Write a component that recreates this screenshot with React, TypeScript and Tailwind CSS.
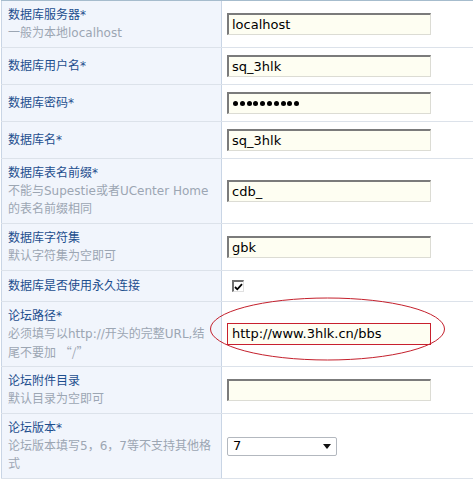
import React from "react";

type Row = {
  label: string;
  hint?: React.ReactNode[];
  h: string;
  field: React.ReactNode;
};

function TextBox({ value, red }: { value?: string; red?: boolean }) {
  return (
    <div
      className={
        red
          ? "w-[204px] h-[22px] border border-[#c8202e] bg-[#fefef2] pl-[4px] flex items-center text-[13px] text-black"
          : "w-[204px] h-[22px] border-t-2 border-l-2 border-r border-b border-t-[#7b7b7b] border-l-[#7b7b7b] border-r-[#dcdcd4] border-b-[#dcdcd4] bg-[#fefef2] pl-[3px] flex items-center text-[13px] text-black"
      }
    >
      {value}
    </div>
  );
}

function PasswordBox() {
  return (
    <div className="w-[204px] h-[22px] border-t-2 border-l-2 border-r border-b border-t-[#7b7b7b] border-l-[#7b7b7b] border-r-[#dcdcd4] border-b-[#dcdcd4] bg-[#fefef2] pl-[4px] flex items-center gap-[1.8px]">
      {Array.from({ length: 10 }).map((_, i) => (
        <span key={i} className="w-[5px] h-[5px] rounded-full bg-black" />
      ))}
    </div>
  );
}

function CheckBox() {
  return (
    <div className="ml-[5px] w-[12px] h-[12px] border-t-2 border-l-2 border-r border-b border-t-[#6f6f6f] border-l-[#6f6f6f] border-r-[#e0e0e0] border-b-[#e0e0e0] bg-white flex items-center justify-center">
      <svg width="9" height="8" viewBox="0 0 9 8">
        <path d="M1 4 L3.3 6.3 L8 1.2" stroke="#000" strokeWidth="1.8" fill="none" />
      </svg>
    </div>
  );
}

function SelectBox() {
  return (
    <div className="w-[110px] h-[19px] border border-[#b3b8bf] rounded-[2px] bg-white flex items-center justify-between pl-[5px] pr-[5px] text-[13px] text-black">
      <span>7</span>
      <svg width="8" height="5" viewBox="0 0 8 5">
        <path d="M0 0 H8 L4 5 Z" fill="#111" />
      </svg>
    </div>
  );
}

const cjk = { fontFamily: '"Noto Sans CJK SC", sans-serif' };

const rows: Row[] = [
  { label: "数据库服务器*", hint: ["一般为本地localhost"], h: "h-[47px]", field: <TextBox value="localhost" /> },
  { label: "数据库用户名*", h: "h-[37px]", field: <TextBox value="sq_3hlk" /> },
  { label: "数据库密码*", h: "h-[37px]", field: <PasswordBox /> },
  { label: "数据库名*", h: "h-[37px]", field: <TextBox value="sq_3hlk" /> },
  {
    label: "数据库表名前缀*",
    hint: ["不能与Supestie或者UCenter Home", "的表名前缀相同"],
    h: "h-[65px]",
    field: <TextBox value="cdb_" />,
  },
  { label: "数据库字符集", hint: ["默认字符集为空即可"], h: "h-[47px]", field: <TextBox value="gbk" /> },
  { label: "数据库是否使用永久连接", h: "h-[31px]", field: <CheckBox /> },
  {
    label: "论坛路径*",
    hint: [
      "必须填写以http://开头的完整URL,结",
      <>
        尾不要加 <span style={cjk}>“/”</span>
      </>,
    ],
    h: "h-[65px]",
    field: <TextBox value="http://www.3hlk.cn/bbs" red />,
  },
  { label: "论坛附件目录", hint: ["默认目录为空即可"], h: "h-[47px]", field: <TextBox /> },
  {
    label: "论坛版本*",
    hint: ["论坛版本填写5，6，7等不支持其他格", "式"],
    h: "h-[65px]",
    field: <SelectBox />,
  },
];

export default function App() {
  return (
    <div
      className="relative w-[473px] h-[484px] bg-white overflow-hidden"
      style={{ fontFamily: '"DejaVu Sans", "Noto Sans CJK SC", sans-serif' }}
    >
      <div className="ml-px border-t border-[#a6bccd]">
        {rows.map((r, i) => (
          <div key={i} className={`grid grid-cols-[221px_1fr] border-b border-[#dce2ea] ${r.h}`}>
            <div className="flex flex-col justify-center pl-[6px] bg-[#f1f5fc] border-l border-r border-[#c9d5e5] text-[12px] leading-[18px] whitespace-nowrap">
              <div className="text-[#1d4e8e]">{r.label}</div>
              {r.hint?.map((t, j) => (
                <div key={j} className="text-[#9ca6b3]">
                  {t}
                </div>
              ))}
            </div>
            <div className="flex items-center pl-[5px]">{r.field}</div>
          </div>
        ))}
      </div>

      {/* annotation ellipse */}
      <svg className="absolute left-[209px] top-[297px]" width="238" height="66" viewBox="0 0 238 66">
        <ellipse cx="118.5" cy="32" rx="117" ry="31" fill="none" stroke="#c4202c" strokeWidth="1" />
      </svg>
    </div>
  );
}
